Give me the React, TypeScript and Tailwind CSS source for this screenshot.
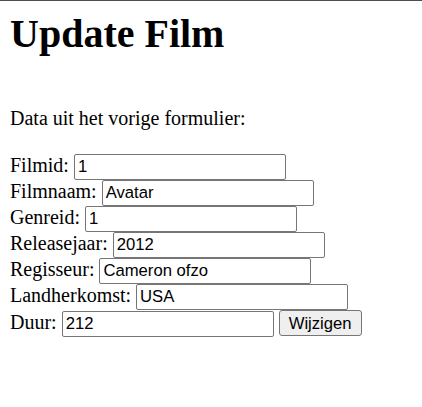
import React from 'react'

const fields = [
    { label: 'Filmid:', value: '1' },
    { label: 'Filmnaam:', value: 'Avatar' },
    { label: 'Genreid:', value: '1' },
    { label: 'Releasejaar:', value: '2012' },
    { label: 'Regisseur:', value: 'Cameron ofzo' },
    { label: 'Landherkomst:', value: 'USA' },
    { label: 'Duur:', value: '212' },
]

const inputCls =
    "w-[212px] h-[26px] border border-[#767676] rounded-[2px] px-[3px] py-0 bg-white text-black text-[16.67px] font-['Liberation_Sans',Arial,sans-serif] outline-none"

export default function App() {
    return (
        <div className="min-h-[407px] bg-white border-t border-[#4d4d4d] px-[10px] text-black font-['Liberation_Serif','Times_New_Roman',serif] text-[20px]">
            <h1 className="mt-[11px] text-[40px] leading-[44px] font-bold">Update Film</h1>

            <p className="mt-[51px] leading-[23px]">Data uit het vorige formulier:</p>

            {/* form */}
            <form className="mt-[24px] flex flex-col" onSubmit={(e) => e.preventDefault()}>
                {fields.map((f, i) => (
                    <div key={f.label} className="flex items-baseline gap-[5px] h-[26px]">
                        <span className="leading-[23px]">{f.label}</span>
                        <input type="text" defaultValue={f.value} className={inputCls} />
                        {i === fields.length - 1 && (
                            <button
                                type="submit"
                                className="h-[26px] px-[9px] border border-[#767676] rounded-[3px] bg-[#efefef] text-black text-[16.67px] font-['Liberation_Sans',Arial,sans-serif]"
                            >
                                Wijzigen
                            </button>
                        )}
                    </div>
                ))}
            </form>
        </div>
    )
}
